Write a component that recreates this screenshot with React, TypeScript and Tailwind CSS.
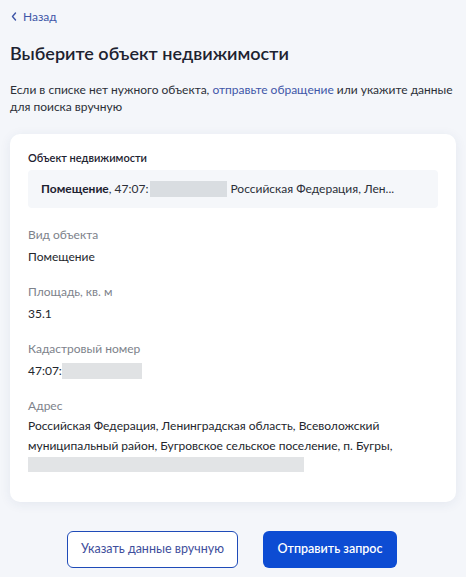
import React from "react";

function Field({ label, children }: { label: string; children: React.ReactNode }) {
  return (
    <div className="flex flex-col">
      <div className="text-[12px] leading-[20px] text-[#7d828b]">{label}</div>
      <div className="text-[12px] leading-[20px] text-[#23262d] mt-[2px]">{children}</div>
    </div>
  );
}

export default function App() {
  return (
    <div
      className="min-h-[577px] w-[466px] bg-[#f4f6fa] px-[10px] pt-[8px] text-[#23262d]"
      style={{ fontFamily: "Lato, 'Noto Sans', sans-serif" }}
    >
      <div className="flex items-center gap-[6px] h-[17px] text-[12px] text-[#3f56a8]">
        <svg width="6" height="9" viewBox="0 0 6 9" className="ml-[1px]">
          <path d="M4.5 1 L1.5 4.5 L4.5 8" fill="none" stroke="#3f56a8" strokeWidth="1.4" strokeLinecap="round" strokeLinejoin="round" />
        </svg>
        <span>Назад</span>
      </div>

      <h1 className="mt-[15px] text-[18px] leading-[26px] font-semibold text-[#1d2230]">
        Выберите объект недвижимости
      </h1>

      <p className="mt-[15px] text-[12px] leading-[17px] text-[#2b2f38]">
        Если в списке нет нужного объекта,{" "}
        <span className="text-[#3f56a8]">отправьте обращение</span> или укажите данные для поиска вручную
      </p>

      <div className="mt-[19px] rounded-[10px] bg-white px-[18px] pt-[16px] pb-[27px] shadow-[0_2px_12px_rgba(40,60,120,0.08)]">
        <div className="text-[11px] leading-[16px] font-semibold text-[#1d2230]">Объект недвижимости</div>
        <div className="mt-[4px] h-[38px] rounded-[4px] bg-[#f5f7fa] px-[13px] flex items-center">
          <div className="whitespace-nowrap text-[12px] text-[#2b2f38] flex items-center">
            <span className="font-bold text-[#1d2230]">Помещение</span>
            <span>, 47:07:</span>
            <span className="inline-block h-[16px] w-[77px] bg-[#d9dde1] ml-[2px] mr-[3px]" />
            <span>Российская Федерация, Лен...</span>
          </div>
        </div>

        <div className="mt-[17px] flex flex-col gap-[15px]">
          <Field label="Вид объекта">Помещение</Field>
          <Field label="Площадь, кв. м">35.1</Field>
          <Field label="Кадастровый номер">
            <span className="flex items-center">
              47:07:
              <span className="inline-block h-[16px] w-[80px] bg-[#e0e2e4]" />
            </span>
          </Field>
          <div className="flex flex-col">
            <div className="text-[12px] leading-[20px] text-[#7d828b]">Адрес</div>
            <div className="text-[12px] leading-[19.5px] text-[#23262d]">
              Российская Федерация, Ленинградская область, Всеволожский
              <br />
              муниципальный район, Бугровское сельское поселение, п. Бугры,
              <div className="h-[19.5px] flex items-center">
                <span className="inline-block h-[15px] w-[276px] bg-[#e2e4e6]" />
              </div>
            </div>
          </div>
        </div>
      </div>

      <div className="mt-[29px] flex justify-center gap-[25px] pr-[2px]">
        <button className="h-[37px] w-[171px] rounded-[6px] border border-[#1f4bb8] bg-white text-[12.5px] text-[#3f4f9c]">
          Указать данные вручную
        </button>
        <button className="h-[37px] w-[134px] rounded-[6px] bg-[#0d4cd3] text-[12.5px] font-semibold text-white">
          Отправить запрос
        </button>
      </div>
    </div>
  );
}
